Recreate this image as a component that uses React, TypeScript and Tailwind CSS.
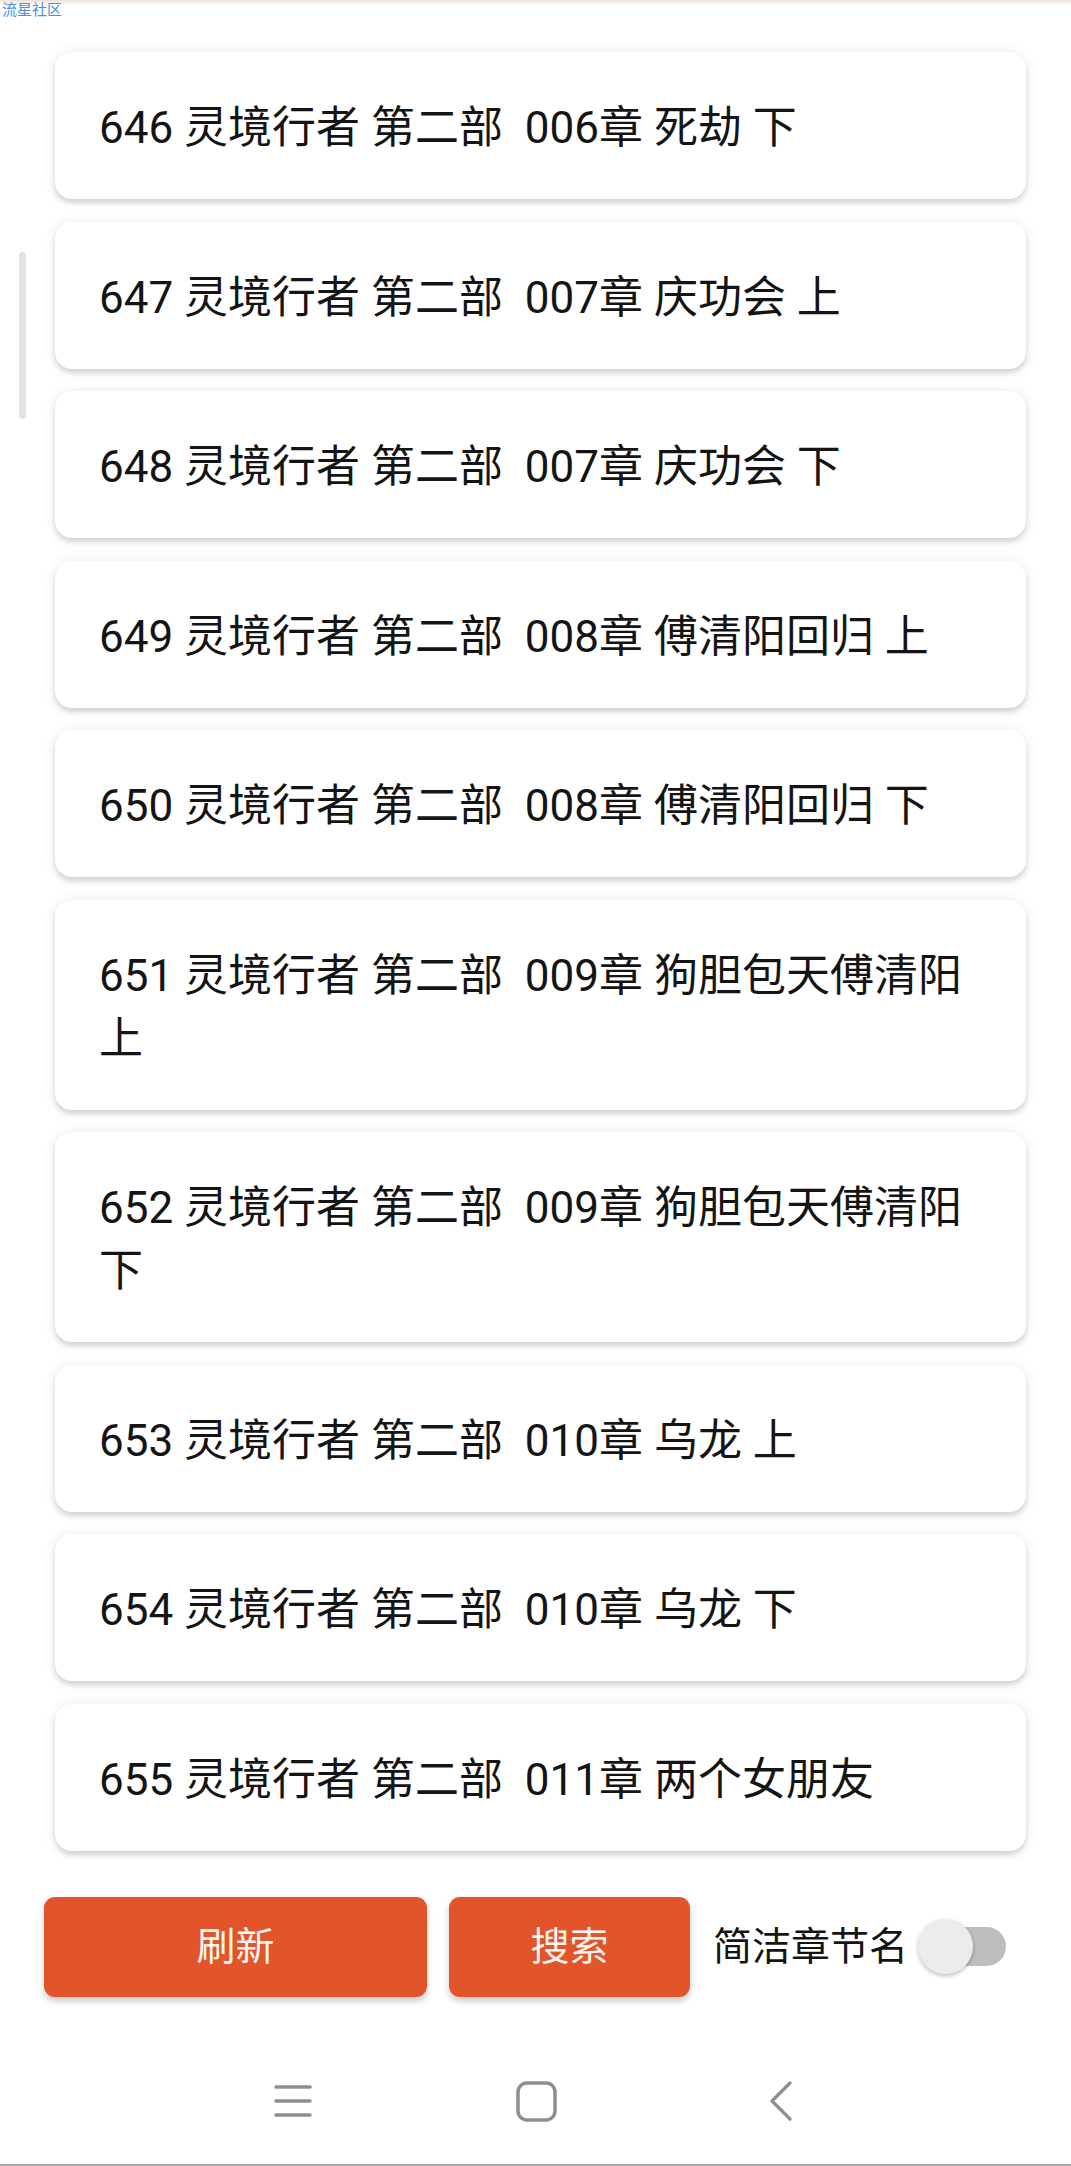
import React from 'react';

const chapters = [
  "646 灵境行者 第二部  006章 死劫 下",
  "647 灵境行者 第二部  007章 庆功会 上",
  "648 灵境行者 第二部  007章 庆功会 下",
  "649 灵境行者 第二部  008章 傅清阳回归 上",
  "650 灵境行者 第二部  008章 傅清阳回归 下",
  "651 灵境行者 第二部  009章 狗胆包天傅清阳 上",
  "652 灵境行者 第二部  009章 狗胆包天傅清阳 下",
  "653 灵境行者 第二部  010章 乌龙 上",
  "654 灵境行者 第二部  010章 乌龙 下",
  "655 灵境行者 第二部  011章 两个女朋友",
];

const NavBar = () => (
  <div className="flex items-center h-[42px] mt-[83px] pl-[273px]">
    <svg width="40" height="36" viewBox="0 0 40 36" className="block">
      <g stroke="#8e8e8e" strokeWidth="3.5" strokeLinecap="round">
        <line x1="3" y1="4" x2="37" y2="4" />
        <line x1="3" y1="18" x2="37" y2="18" />
        <line x1="3" y1="32" x2="37" y2="32" />
      </g>
    </svg>
    <svg width="41" height="41" viewBox="0 0 41 41" className="block ml-[203px]">
      <rect x="2" y="2" width="37" height="37" rx="9" fill="none" stroke="#8e8e8e" strokeWidth="3.5" />
    </svg>
    <svg width="24" height="40" viewBox="0 0 24 40" className="block ml-[212px]">
      <polyline points="21,2 3,20 21,38" fill="none" stroke="#8e8e8e" strokeWidth="3.2" strokeLinecap="round" strokeLinejoin="round" />
    </svg>
  </div>
);

const App = () => {
  return (
    <div className="relative w-[1071px] h-[2166px] bg-white flex flex-col overflow-hidden font-['Roboto','Noto_Sans_CJK_SC',sans-serif]">
      {/* status strip + watermark */}
      <div className="h-[5px] bg-gradient-to-b from-[#eadfd8] to-white" />
      <span className="absolute left-[2px] top-[1px] text-[15px] leading-[16px] text-[#4b8fdf] font-['Noto_Sans_CJK_SC',sans-serif]">
        流星社区
      </span>

      {/* scroll indicator */}
      <div className="absolute left-[19px] top-[252px] w-[7px] h-[167px] rounded-full bg-[#e3e3e3]" />

      {/* chapter list */}
      <div className="mt-[38px] ml-[43px] w-[993px] h-[1817px] overflow-hidden">
        <div className="flex flex-col gap-[22.5px] pt-[9px] pl-[12px] pr-[10px]">
          {chapters.map((title) => (
            <div
              key={title}
              className="bg-white rounded-[17px] px-[44px] pt-[45px] pb-[39px] shadow-[0_4px_5px_rgba(0,0,0,0.13),0_1px_14px_rgba(0,0,0,0.09)]"
            >
              <p className="text-[44px] leading-[63px] text-[#141414] whitespace-pre-wrap">{title}</p>
            </div>
          ))}
        </div>
      </div>

      {/* actions */}
      <div className="flex items-center h-[100px] mt-[37px] pl-[44px]">
        <button className="w-[383px] h-[100px] rounded-[11px] bg-[#e25429] text-[#fff6f0] text-[39px] shadow-[0_4px_6px_rgba(0,0,0,0.22)]">
          刷新
        </button>
        <button className="w-[241px] h-[100px] ml-[22px] rounded-[11px] bg-[#e25429] text-[#fff6f0] text-[39px] shadow-[0_4px_6px_rgba(0,0,0,0.22)]">
          搜索
        </button>
        <span className="ml-[23px] text-[39px] text-[#141414]">简洁章节名</span>
        <div className="relative ml-[10px] w-[88px] h-[56px]">
          <div className="absolute right-0 top-[8px] w-[70px] h-[39px] rounded-full bg-[#bdbdbd]" />
          <div className="absolute left-0 top-0 w-[55px] h-[55px] rounded-full bg-[#ececec] shadow-[0_2px_4px_rgba(0,0,0,0.25)]" />
        </div>
      </div>

      <NavBar />

      <div className="mt-auto h-[2px] bg-[#a9a9a9]" />
    </div>
  );
};

export default App;
